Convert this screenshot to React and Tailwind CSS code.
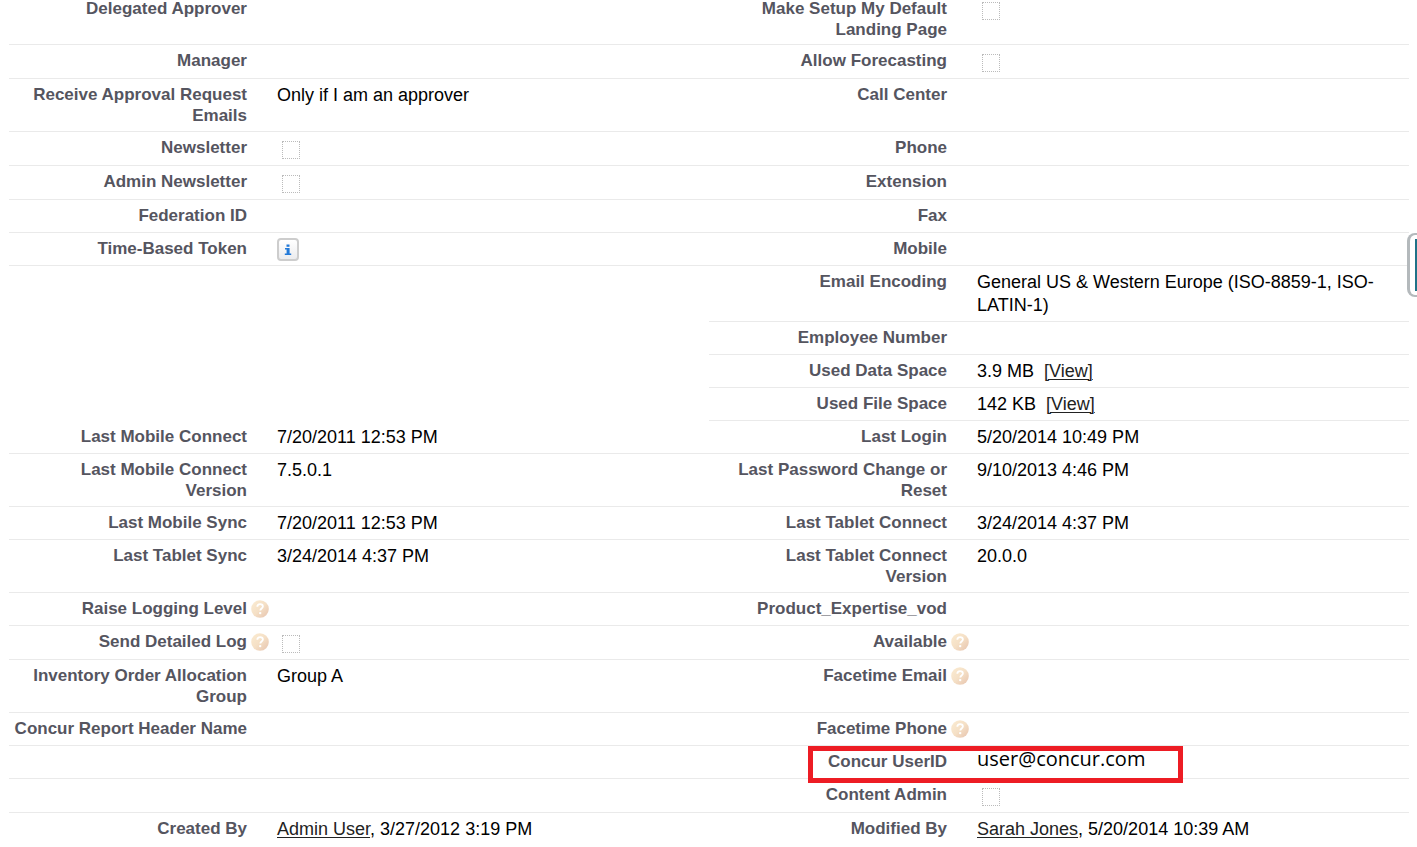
import React from 'react';

const link = 'text-[#222] underline decoration-1 underline-offset-2';

// Each row holds a left and a right field. A null side leaves that half blank.
const rows = [
  [{ label: 'Delegated Approver' }, { label: 'Make Setup My Default Landing Page', type: 'checkbox' }],
  [{ label: 'Manager' }, { label: 'Allow Forecasting', type: 'checkbox' }],
  [{ label: 'Receive Approval Request Emails', value: 'Only if I am an approver' }, { label: 'Call Center' }],
  [{ label: 'Newsletter', type: 'checkbox' }, { label: 'Phone' }],
  [{ label: 'Admin Newsletter', type: 'checkbox' }, { label: 'Extension' }],
  [{ label: 'Federation ID' }, { label: 'Fax' }],
  [{ label: 'Time-Based Token', type: 'info' }, { label: 'Mobile' }],
  [null, { label: 'Email Encoding', value: 'General US & Western Europe (ISO-8859-1, ISO-LATIN-1)' }],
  [null, { label: 'Employee Number' }],
  [null, { label: 'Used Data Space', value: <>3.9 MB&nbsp; <a href="#data-space" className={link}>[View]</a></> }],
  [null, { label: 'Used File Space', value: <>142 KB&nbsp; <a href="#file-space" className={link}>[View]</a></> }],
  [{ label: 'Last Mobile Connect', value: '7/20/2011 12:53 PM' }, { label: 'Last Login', value: '5/20/2014 10:49 PM' }],
  [{ label: <>Last Mobile Connect<br />Version</>, value: '7.5.0.1' }, { label: 'Last Password Change or Reset', value: '9/10/2013 4:46 PM' }],
  [{ label: 'Last Mobile Sync', value: '7/20/2011 12:53 PM' }, { label: 'Last Tablet Connect', value: '3/24/2014 4:37 PM' }],
  [{ label: 'Last Tablet Sync', value: '3/24/2014 4:37 PM' }, { label: <>Last Tablet Connect<br />Version</>, value: '20.0.0' }],
  [{ label: 'Raise Logging Level', help: true }, { label: 'Product_Expertise_vod' }],
  [{ label: 'Send Detailed Log', help: true, type: 'checkbox' }, { label: 'Available', help: true }],
  [{ label: 'Inventory Order Allocation Group', value: 'Group A' }, { label: 'Facetime Email', help: true }],
  [{ label: 'Concur Report Header Name' }, { label: 'Facetime Phone', help: true }],
  [{ label: '' }, { label: 'Concur UserID', type: 'highlight', value: 'user@concur.com' }],
  [{ label: '' }, { label: 'Content Admin', type: 'checkbox' }],
  [
    { label: 'Created By', value: <><a href="#admin-user" className={link}>Admin User</a>, 3/27/2012 3:19 PM</> },
    { label: 'Modified By', value: <><a href="#sarah-jones" className={link}>Sarah Jones</a>, 5/20/2014 10:39 AM</> },
  ],
];

function HelpIcon({ label }) {
  return (
    <button type="button" aria-label={`Help: ${label}`} className="mt-0.5 block">
      <svg width="18" height="18" viewBox="0 0 18 18" className="block">
        <defs>
          <linearGradient id="help-fill" x1="0" y1="0" x2="1" y2="1">
            <stop offset="0" stopColor="#fbecd2" />
            <stop offset="0.5" stopColor="#f5e0c6" />
            <stop offset="1" stopColor="#e6c3ae" />
          </linearGradient>
        </defs>
        <circle cx="9" cy="9" r="8.8" fill="url(#help-fill)" />
        <path d="M6.3 6.8c0-1.7 1.2-2.6 2.8-2.6s2.8 1 2.8 2.4c0 1.9-2.6 1.9-2.6 3.9" fill="none" stroke="#fff" strokeWidth="1.8" />
        <circle cx="9.2" cy="13.1" r="1.2" fill="#fff" />
      </svg>
    </button>
  );
}

function InfoButton() {
  return (
    <button
      type="button"
      aria-label="Time-Based Token information"
      className="flex h-[23px] w-[22px] items-center justify-center rounded-[4px] border-2 border-[#cdcdcd] bg-gradient-to-b from-white to-[#ececee]"
    >
      <svg width="8" height="12" viewBox="0 0 8 12" fill="#2279d8">
        <rect x="2.5" y="0.5" width="3" height="2.3" />
        <path d="M1 4h4.6v5.4H7.2V11H.8V9.4h1.8V5.6H1z" />
      </svg>
    </button>
  );
}

function FieldValue({ field, id }) {
  if (field.type === 'checkbox') {
    return (
      <input
        id={id}
        type="checkbox"
        disabled
        className="mt-1 mb-0.5 ml-[5px] block h-[18px] w-[18px] appearance-none border border-dotted border-[#bbb] bg-white"
      />
    );
  }
  if (field.type === 'info') return <InfoButton />;
  if (field.type === 'highlight') {
    return <span className="block font-['Open_Sans',sans-serif] text-xl leading-4">{field.value}</span>;
  }
  return field.value || null;
}

function Field({ field, id, first, last }) {
  if (!field) return <td colSpan={2} />;
  const Tag = field.label ? 'th' : 'td';
  const line = last ? '' : 'border-b border-[#eaeaea]';
  return (
    <>
      <Tag
        scope={field.label ? 'row' : undefined}
        className={`${first ? 'pt-0 pb-1' : 'py-[5px]'} pl-[3px] text-right align-top text-[17px] leading-[21px] font-bold text-[#55555f] ${line}`}
      >
        {field.type === 'checkbox' ? <label htmlFor={id}>{field.label}</label> : field.label}
      </Tag>
      <td className={`relative ${first ? 'pt-0' : 'pt-[5px]'} pb-1 align-top text-lg leading-[23px] text-black ${line}`}>
        <div className="flex min-h-[23px]">
          <div className="w-[30px] shrink-0 pl-1">{field.help && <HelpIcon label={field.label} />}</div>
          <div className="min-w-0 flex-1 pr-2">
            <FieldValue field={field} id={id} />
          </div>
        </div>
        {field.type === 'highlight' && (
          <div className="pointer-events-none absolute top-0 -left-[139px] z-10 h-[37px] w-[375px] border-5 border-[#ed1c24]" />
        )}
      </td>
    </>
  );
}

export default function App() {
  return (
    <main className="relative bg-white font-['Liberation_Sans',Arial,sans-serif]">
      <div className="pr-2 pl-[9px]">
        <table className="-mt-0.5 w-full table-fixed border-separate border-spacing-0">
          <colgroup>
            <col className="w-[17%]" />
            <col className="w-[33%]" />
            <col className="w-[17%]" />
            <col className="w-[33%]" />
          </colgroup>
          <tbody>
            {rows.map(([left, right], i) => {
              const first = i === 0;
              const last = i === rows.length - 1;
              return (
                <tr key={i}>
                  <Field field={left} id={`left-${i}`} first={first} last={last} />
                  <Field field={right} id={`right-${i}`} first={first} last={last} />
                </tr>
              );
            })}
          </tbody>
        </table>
      </div>

      {/* Collapsed side panel handle */}
      <button
        type="button"
        aria-label="Open side panel"
        className="absolute top-[235px] right-0 flex h-[64px] w-[10px] items-center justify-end rounded-l-lg border-y-2 border-l-3 border-[#b4b9bc] bg-white"
      >
        <span className="h-[52px] w-0.5 bg-[#1f7288]" />
      </button>
    </main>
  );
}
